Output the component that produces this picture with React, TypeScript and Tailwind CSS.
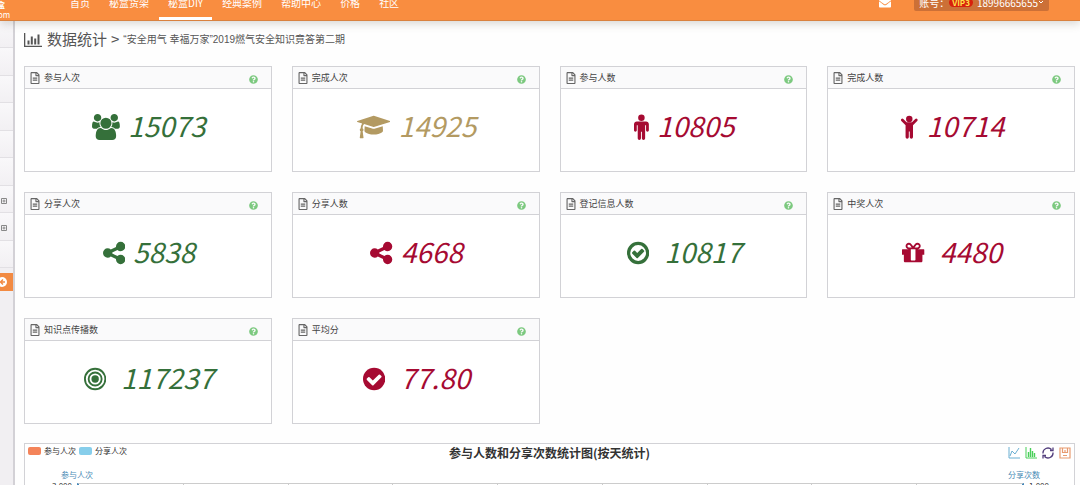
import React from "react";
import { FaEnvelope, FaQuestionCircle, FaRegFileAlt } from "react-icons/fa";

type IconName =
  | "users"
  | "cap"
  | "male"
  | "child"
  | "share"
  | "checkO"
  | "check"
  | "gift"
  | "bullseye";

type Stat = {
  title: string;
  value: string;
  icon: IconName;
  color: string;
  wide?: boolean;
};

const GREEN = "text-[#35703a]";
const RED = "text-[#a60a32]";
const GOLD = "text-[#b39a62]";

const stats: Stat[] = [
  { title: "参与人次", value: "15073", icon: "users", color: GREEN },
  { title: "完成人次", value: "14925", icon: "cap", color: GOLD },
  { title: "参与人数", value: "10805", icon: "male", color: RED },
  { title: "完成人数", value: "10714", icon: "child", color: RED },
  { title: "分享人次", value: "5838", icon: "share", color: GREEN },
  { title: "分享人数", value: "4668", icon: "share", color: RED },
  { title: "登记信息人数", value: "10817", icon: "checkO", color: GREEN, wide: true },
  { title: "中奖人次", value: "4480", icon: "gift", color: RED, wide: true },
  { title: "知识点传播数", value: "117237", icon: "bullseye", color: GREEN, wide: true },
  { title: "平均分", value: "77.80", icon: "check", color: RED, wide: true },
];

const navItems = ["首页", "秘盒货架", "秘盒DIY", "经典案例", "帮助中心", "价格", "社区"];

const icons: Record<IconName, { width: number; top?: number; body: React.ReactNode }> = {
  users: {
    width: 1920,
    body: (
      <path d="M593 896q-162 5-265 128h-134q-82 0-138-40.5t-56-118.5q0-353 124-353 6 0 43.5 21t97.5 42.5 119 21.5q67 0 133-23-5 37-5 66 0 139 81 256zm1071 637q0 120-73 189.5t-194 69.5h-874q-121 0-194-69.5t-73-189.5q0-53 3.5-103.5t14-109 26.5-108.5 43-97.5 62-81 85.5-53.5 111.5-20q10 0 43 21.5t73 48 107 48 135 21.5 135-21.5 107-48 73-48 43-21.5q61 0 111.5 20t85.5 53.5 62 81 43 97.5 26.5 108.5 14 109 3.5 103.5zm-1024-1277q0 106-75 181t-181 75-181-75-75-181 75-181 181-75 181 75 75 181zm704 384q0 159-112.5 271.5t-271.5 112.5-271.5-112.5-112.5-271.5 112.5-271.5 271.5-112.5 271.5 112.5 112.5 271.5zm576 225q0 78-56 118.5t-138 40.5h-134q-103-123-265-128 81-117 81-256 0-29-5-66 66 23 133 23 59 0 119-21.5t97.5-42.5 43.5-21q124 0 124 353zm-128-609q0 106-75 181t-181 75-181-75-75-181 75-181 181-75 181 75 75 181z" />
    ),
  },
  cap: {
    width: 2304,
    body: (
      <path d="M1774 836l18 316q4 69-82 128t-235 93.5-323 34.5-323-34.5-235-93.5-82-128l18-316 574 181q22 7 48 7t48-7zm530-324q0 23-22 31l-1120 352q-4 1-10 1t-10-1l-652-206q-43 34-71 111.5t-34 178.5q63 36 63 109 0 69-58 107l58 433q2 14-8 25-9 11-24 11h-192q-15 0-24-11-10-11-8-25l58-433q-58-38-58-107 0-73 65-111 11-207 98-330l-333-104q-22-8-22-31t22-31l1120-352q4-1 10-1t10 1l1120 352q22 8 22 31z" />
    ),
  },
  male: {
    width: 1024,
    top: 128,
    body: (
      <>
        <path d="M1024 832v416q0 40-28 68t-68 28-68-28-28-68v-352h-64v912q0 46-33 79t-79 33-79-33-33-79v-464h-64v464q0 46-33 79t-79 33-79-33-33-79v-912h-64v352q0 40-28 68t-68 28-68-28-28-68v-416q0-80 56-136t136-56h640q80 0 136 56t56 136z" />
        <circle cx="512" cy="384" r="224" />
      </>
    ),
  },
  child: {
    width: 1280,
    body: (
      <>
        <path d="M1188 476l-292 292v824q0 46-33 79t-79 33-79-33-33-79v-384h-64v384q0 46-33 79t-79 33-79-33-33-79v-824l-292-292q-28-28-28-68t28-68q29-28 68.5-28t67.5 28l228 228h368l228-228q28-28 68-28t68 28q28 29 28 68.5t-28 67.5z" />
        <circle cx="640" cy="352" r="224" />
      </>
    ),
  },
  share: {
    width: 1536,
    body: (
      <path d="M1216 1024q133 0 226.5 93.5t93.5 226.5-93.5 226.5-226.5 93.5-226.5-93.5-93.5-226.5q0-12 2-34l-360-180q-92 86-218 86-133 0-226.5-93.5t-93.5-226.5 93.5-226.5 226.5-93.5q126 0 218 86l360-180q-2-22-2-34 0-133 93.5-226.5t226.5-93.5 226.5 93.5 93.5 226.5-93.5 226.5-226.5 93.5q-126 0-218-86l-360 180q2 22 2 34t-2 34l360 180q92-86 218-86z" />
    ),
  },
  checkO: {
    width: 1536,
    body: (
      <>
        <circle cx="768" cy="896" r="656" fill="none" stroke="currentColor" strokeWidth="224" />
        <path d="M1171 813l-422 422q-19 19-45 19t-45-19l-294-294q-19-19-19-45t19-45l102-102q19-19 45-19t45 19l147 147 275-275q19-19 45-19t45 19l102 102q19 19 19 45t-19 45z" />
      </>
    ),
  },
  check: {
    width: 1536,
    body: (
      <>
        <circle cx="768" cy="896" r="768" />
        <path
          fill="white"
          d="M1284 734q0-28-18-46l-91-90q-19-19-45-19t-45 19l-408 407-226-226q-19-19-45-19t-45 19l-91 90q-18 18-18 46 0 27 18 45l362 362q19 19 45 19 27 0 46-19l543-543q18-18 18-45z"
        />
      </>
    ),
  },
  gift: {
    width: 1536,
    body: (
      <path d="M928 1484v-844h-320v716q0 25 18 38.5t46 13.5h192q28 0 46-13.5t18-38.5zm-456-972h195l-126-161q-26-31-69-31-40 0-68 28t-28 68 28 68 68 28zm688-96q0-40-28-68t-68-28q-43 0-69 31l-125 161h194q40 0 68-28t28-68zm376 256v320q0 14-9 23t-23 9h-96v416q0 40-28 68t-68 28h-1088q-40 0-68-28t-28-68v-416h-96q-14 0-23-9t-9-23v-320q0-14 9-23t23-9h440q-93 0-158.5-65.5t-65.5-158.5 65.5-158.5 158.5-65.5q107 0 168 77l128 165 128-165q61-77 168-77 93 0 158.5 65.5t65.5 158.5-65.5 158.5-158.5 65.5h440q14 0 23 9t9 23z" />
    ),
  },
  bullseye: {
    width: 1536,
    body: (
      <>
        <circle cx="768" cy="896" r="256" />
        <circle cx="768" cy="896" r="448" fill="none" stroke="currentColor" strokeWidth="128" />
        <circle cx="768" cy="896" r="704" fill="none" stroke="currentColor" strokeWidth="128" />
      </>
    ),
  },
};

const StatIcon = ({ name }: { name: IconName }) => {
  const icon = icons[name];
  return (
    <svg
      viewBox={`0 ${icon.top ?? 0} ${icon.width} 1792`}
      className="h-[26px] w-auto shrink-0"
      fill="currentColor"
      aria-hidden="true"
    >
      {icon.body}
    </svg>
  );
};

const StatCard = ({ stat }: { stat: Stat }) => (
  <section className="h-[106px] border border-[#d2d2d6] bg-white">
    <header className="flex h-[22px] items-center border-b border-[#d2d2d6] bg-[#fafafb] pr-[13px] pl-[5px]">
      <FaRegFileAlt className="mr-1 h-3 w-[10px] text-[#666]" />
      <h2 className="flex-1 text-[9px] text-[#444]">{stat.title}</h2>
      <button type="button" aria-label="帮助" className="mt-1 text-[#7cc97f]">
        <FaQuestionCircle className="size-[9px]" />
      </button>
    </header>
    <div
      className={`flex h-[76px] items-center justify-center pl-[2px] ${stat.color} ${
        stat.wide ? "gap-[15px]" : "gap-2"
      }`}
    >
      <StatIcon name={stat.icon} />
      <span className="pb-[5px] text-[28px] leading-[28px] italic">{stat.value}</span>
    </div>
  </section>
);

const Header = () => (
  <header className="relative z-10 flex h-[21px] shrink-0 items-end justify-between border-b border-[#d9813f] bg-[#f98d40] text-[10px] text-white shadow-[0_3px_8px_rgba(90,80,70,0.22)]">
    <div className="flex items-end">
      <a href="#" className="flex h-8 w-[61px] flex-col overflow-hidden text-[8px] leading-[10px]">
        <span className="-ml-[3px] pt-3 font-bold">盒</span>
        <span className="-ml-[6px]">com</span>
      </a>
      <nav className="flex gap-px">
        {navItems.map((item) => (
          <a
            key={item}
            href="#"
            className={`h-[34px] border-b-[3px] px-[9px] leading-[34px] ${
              item === "秘盒DIY" ? "border-white" : "border-transparent"
            }`}
          >
            {item}
          </a>
        ))}
      </nav>
    </div>
    <div className="flex items-end pr-[31px] pb-[9px]">
      <a href="#" aria-label="消息" className="mr-[23px] pb-[2px]">
        <FaEnvelope className="size-3" />
      </a>
      <button
        type="button"
        className="flex h-[18px] items-center rounded-[2px] bg-[#cc7037] px-[5px]"
      >
        账号：
        <span className="mr-1 rounded-full bg-[#d8200c] px-[3px] text-[8px] leading-[9px] font-bold text-[#ffe14a]">
          VIP3
        </span>
        <span>18996665655</span>
        <svg viewBox="0 0 6 6" className="size-[6px]" fill="none" stroke="currentColor">
          <path d="M1 2l2 2 2-2" />
        </svg>
      </button>
    </div>
  </header>
);

const Sidebar = () => (
  <aside className="w-[15px] shrink-0 border-r-2 border-[#d3d1d6] bg-[#f1eff2]">
    <ul className="grid h-[247px] grid-rows-9">
      {Array.from({ length: 9 }, (_, i) => (
        <li
          key={i}
          className="flex items-center border-b border-[#e2e0e4] bg-linear-to-b from-[#f9f8fa] to-[#f2f0f3] pt-1"
        >
          {(i === 6 || i === 7) && (
            <button type="button" aria-label="展开">
              <svg viewBox="0 0 8 8" className="size-2" fill="none" stroke="#888">
                <path d="M1.5 1.5h5v5h-5zM4 2.5v3M2.5 4h3" />
              </svg>
            </button>
          )}
        </li>
      ))}
    </ul>
    <a href="#" aria-label="收起" className="mt-[5px] flex h-[18px] items-center bg-[#f28a42]">
      <svg viewBox="0 0 8 12" className="h-3 w-2" fill="none">
        <circle cx="2" cy="6" r="5" fill="white" />
        <path d="M0 6h5M3 3.5L0.5 6 3 8.5" stroke="#f28a42" strokeWidth="1.5" />
      </svg>
    </a>
  </aside>
);

const ChartTools = () => (
  <div className="flex gap-[5px]">
    <button type="button" aria-label="折线图">
      <svg viewBox="0 0 12 12" className="size-3" fill="none" stroke="#6bafd2">
        <path d="M1 0v11h11M2 9l2-5 3 3 4-6" />
      </svg>
    </button>
    <button type="button" aria-label="柱状图">
      <svg viewBox="0 0 12 12" className="size-3" fill="none" stroke="#48cf58">
        <path d="M1 0v11h11" />
        <path d="M3.5 10V5M5.5 10V1M7.5 10V4M9.5 10V6" strokeWidth="1.4" />
      </svg>
    </button>
    <button type="button" aria-label="还原">
      <svg viewBox="0 0 12 12" className="size-3" fill="none" stroke="#54407e" strokeWidth="1.3">
        <path d="M1 6.5a5 5 0 0 1 8.5-4M11 5.5a5 5 0 0 1-8.5 4M11 .5v3H8M1 11.5v-3h3" />
      </svg>
    </button>
    <button type="button" aria-label="保存为图片">
      <svg viewBox="0 0 12 12" className="size-3" fill="none" stroke="#e89b70" strokeWidth="1.2">
        <path d="M1 1h10v10H1zM3.5 1v4.5h5V1M6 3v2M4 8.5h4" />
      </svg>
    </button>
  </div>
);

const Chart = () => (
  <section className="mt-[19px] border border-[#d2d2d6] bg-white">
    <div className="grid grid-cols-[1fr_auto_1fr] items-start px-[3px] pt-[1px]">
      <div className="flex items-center gap-[3px] text-[8px] leading-[12px] text-[#333]">
        <span className="h-2 w-[13px] rounded-[2px] bg-[#f4845a]" />
        参与人次
        <span className="h-2 w-[13px] rounded-[2px] bg-[#87ceeb]" />
        分享人次
      </div>
      <h2 className="text-[12px] leading-[16px] font-bold text-[#333]">
        参与人数和分享次数统计图(按天统计)
      </h2>
      <div className="flex justify-end pt-[2px]">
        <ChartTools />
      </div>
    </div>
    <div className="mt-[8px] flex justify-between pr-[34px] pl-[36px] text-[8px] leading-[12px] text-[#4a8bb5]">
      <span>参与人次</span>
      <span>分享次数</span>
    </div>
    <div className="flex text-[8px] leading-[8px] text-[#333]">
      <span className="w-[52px] pt-px pr-[5px] text-right">3,000</span>
      <div className="mt-[2px] grid h-40 flex-1 grid-cols-9 border-x-2 border-t border-x-[#4488bb] border-t-[#ccc]">
        {Array.from({ length: 9 }, (_, i) => (
          <div key={i} className="border-r border-[#ccc] last:border-r-0" />
        ))}
      </div>
      <span className="w-[50px] pt-px pl-[5px]">1,000</span>
    </div>
  </section>
);

const App = () => {
  return (
    <div className="flex h-screen flex-col overflow-hidden bg-[#fefefe] font-['Noto_Sans_CJK_SC',sans-serif]">
      <Header />
      <div className="flex min-h-0 flex-1">
        <Sidebar />
        <main className="min-w-0 flex-1 pr-[5px] pl-[9px]">
          <div className="flex h-[45px] items-center pb-[8px] text-[#555]">
            <svg viewBox="0 0 18 14" className="mr-[5px] h-[14px] w-[18px]" fill="currentColor">
              <path d="M0 0h1.3v12.7H18V14H0zM3.5 7.5h2v4h-2zM6.8 3.5h2v8h-2zM10.2 5.5h2v6h-2zM13.5 1.5h2v10h-2z" />
            </svg>
            <h1 className="text-[15px]">数据统计</h1>
            <span className="mx-1 text-[15px]">&gt;</span>
            <span className="font-['Liberation_Sans','Noto_Sans_CJK_SC',sans-serif] text-[10px]">
              “安全用气 幸福万家”2019燃气安全知识竟答第二期
            </span>
          </div>
          <div className="grid grid-cols-4 gap-5">
            {stats.map((stat) => (
              <StatCard key={stat.title} stat={stat} />
            ))}
          </div>
          <Chart />
        </main>
      </div>
    </div>
  );
};

export default App;
